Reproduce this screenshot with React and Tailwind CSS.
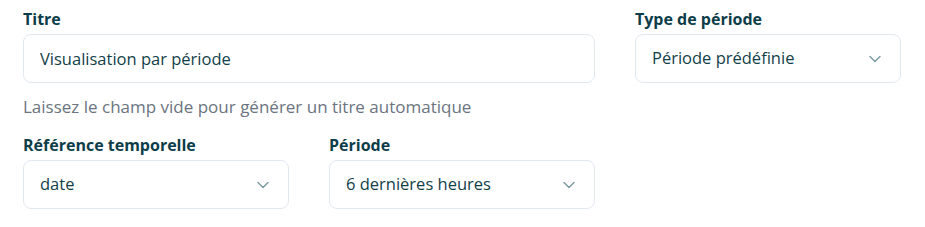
import React from 'react';

function Chevron() {
    return (
        <svg width="20" height="20" viewBox="0 0 24 24" fill="none" stroke="#7d9aa3" strokeWidth="1.7" strokeLinecap="round" strokeLinejoin="round">
            <path d="M6 9l6 6 6-6" />
        </svg>
    );
}

function Select({ value }) {
    return (
        <div className="flex items-center justify-between h-[49px] px-4 border border-[#e2e8f0] rounded-lg bg-white text-[16.5px] text-[#123f4a]">
            <span>{value}</span>
            <span className="-mr-[1px]"><Chevron /></span>
        </div>
    );
}

function Label({ children }) {
    return <label className="block text-[16px] font-bold text-[#0d3d49] mb-[4px] leading-[21px]">{children}</label>;
}

export default function App() {
    return (
        <div className="bg-white w-[925px] h-[227px] pl-[23px] pt-[9px]" style={{ fontFamily: '"Open Sans", Lato, sans-serif' }}>
            <div className="grid grid-cols-[266px_266px_266px] gap-x-[40px]">
                <div className="col-span-2">
                    <Label>Titre</Label>
                    <input
                        type="text"
                        defaultValue="Visualisation par période"
                        className="w-full h-[49px] px-4 border border-[#e2e8f0] rounded-lg text-[16.5px] text-[#123f4a] outline-none"
                    />
                    <p className="mt-[11px] text-[17px] leading-[26px] text-[#6b7480]">Laissez le champ vide pour générer un titre automatique</p>
                </div>
                <div>
                    <Label>Type de période</Label>
                    <Select value="Période prédéfinie" />
                </div>
                <div className="mt-[15px]">
                    <Label>Référence temporelle</Label>
                    <Select value="date" />
                </div>
                <div className="mt-[15px]">
                    <Label>Période</Label>
                    <Select value="6 dernières heures" />
                </div>
            </div>
        </div>
    );
}
